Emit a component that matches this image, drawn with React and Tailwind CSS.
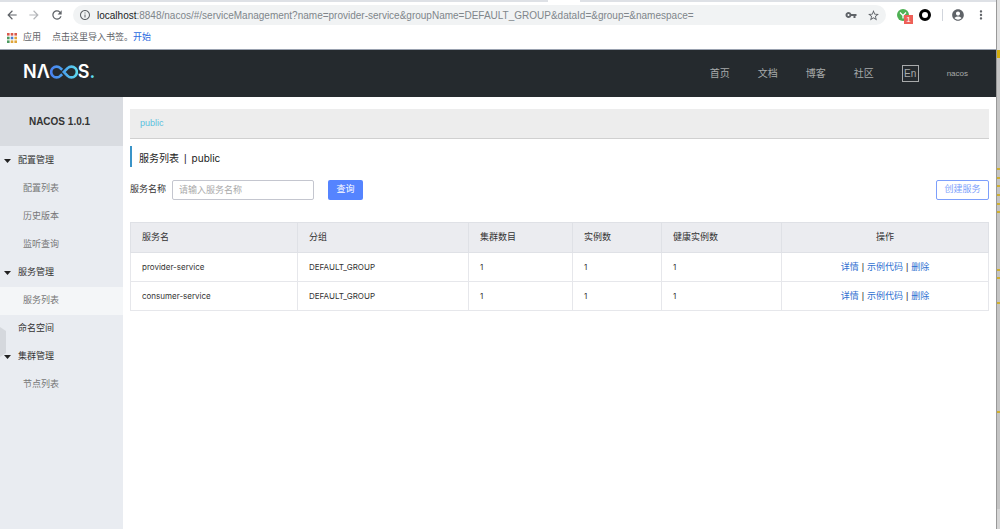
import React, { useState } from 'react';
import {
  MdAccountCircle,
  MdArrowBack,
  MdArrowForward,
  MdInfoOutline,
  MdMoreVert,
  MdRefresh,
  MdStarBorder,
  MdVpnKey,
} from 'react-icons/md';

const menu = [
  { label: '配置管理', children: ['配置列表', '历史版本', '监听查询'] },
  { label: '服务管理', children: ['服务列表'] },
  { label: '命名空间' },
  { label: '集群管理', children: ['节点列表'] },
];

const services = [
  { name: 'provider-service', group: 'DEFAULT_GROUP', clusters: 1, instances: 1, healthy: 1 },
  { name: 'consumer-service', group: 'DEFAULT_GROUP', clusters: 1, instances: 1, healthy: 1 },
];

const appDots = ['#d9594c', '#d9594c', '#d9594c', '#4c9a5f', '#4a7fd0', '#e0a63a', '#4c9a5f', '#e0a63a', '#e0a63a'];

// change markers of the editor window behind the browser
const markers = [168, 177, 185, 194, 203, 211, 269, 277, 302, 411];

function AppsIcon() {
  return (
    <svg className="h-[10px] w-[10px]" viewBox="0 0 10 10" aria-hidden="true">
      {appDots.map((fill, i) => (
        <rect key={i} x={(i % 3) * 3.7} y={Math.floor(i / 3) * 3.7} width="2.6" height="2.6" fill={fill} />
      ))}
    </svg>
  );
}

function Logo() {
  return (
    <a href="#/" aria-label="NACOS" className="mb-[3px] flex h-4 items-center font-['Inter','Liberation_Sans',sans-serif] text-lg/4 font-semibold text-white">
      <span>N</span>
      <span>Λ</span>
      <svg className="h-[14px] w-7" viewBox="0 0 28 14" fill="none" strokeWidth="2.6" aria-hidden="true">
        <defs>
          <linearGradient id="loop" x1="0" x2="28" y1="0" y2="0" gradientUnits="userSpaceOnUse">
            <stop offset="0" stopColor="#4a80f0" />
            <stop offset="0.5" stopColor="#4aa3ee" />
            <stop offset="1" stopColor="#5fdcee" />
          </linearGradient>
        </defs>
        <path d="M12.2 9.2 10.4 10.8A5.4 5.4 0 1 1 10.4 3.2L12.2 4.8M13.8 7 17.6 3.2A5.4 5.4 0 1 1 17.6 10.8Z" stroke="url(#loop)" />
      </svg>
      <span>S</span>
      <span className="text-[#5fdcee]">.</span>
    </a>
  );
}

function BrowserBar() {
  return (
    <div className="border-b border-gray-400 bg-white">
      <div className="flex h-[2px] bg-[#dee1e6]">
        <span className="ml-[548px] w-8 bg-white" />
      </div>
      <div className="flex h-[26px] items-center text-[#5f6368]">
        <button type="button" aria-label="Back" className="ml-[5px]"><MdArrowBack size={14} /></button>
        <button type="button" aria-label="Forward" className="ml-2 text-[#b4b6b9]"><MdArrowForward size={14} /></button>
        <button type="button" aria-label="Reload" className="ml-[9px]"><MdRefresh size={14} /></button>
        <div className="ml-[9px] flex h-5 min-w-0 flex-1 items-center rounded-full bg-[#f1f3f4] px-[6px]">
          <MdInfoOutline size={12} />
          <div role="textbox" aria-label="Address" className="ml-[6px] min-w-0 flex-1 truncate text-[10px] text-[#80868b]">
            <span className="text-[#202124]">localhost</span>:8848/nacos/#/serviceManagement?name=provider-service&amp;groupName=DEFAULT_GROUP&amp;dataId=&amp;group=&amp;namespace=
          </div>
          <button type="button" aria-label="Passwords"><MdVpnKey size={12} /></button>
          <button type="button" aria-label="Bookmark" className="ml-[10px]"><MdStarBorder size={13} /></button>
        </div>
        <div className="relative ml-[11px] h-3 w-3">
          <svg className="h-3 w-3" viewBox="0 0 12 12" aria-hidden="true">
            <circle cx="6" cy="6" r="6" fill="#4fb154" />
            <path d="M3 3.5 6 6.5 9 3.5M6 6.5V9.5" stroke="#fff" strokeWidth="1.3" fill="none" />
          </svg>
          <span className="absolute top-[6px] left-[7px] h-[9px] w-[9px] bg-[#ee6058] text-center text-[8px]/[9px] text-white">1</span>
        </div>
        <span className="ml-[10px] h-3 w-3 rounded-full border-[3px] border-black" />
        <span className="ml-[11px] h-3 w-px bg-gray-300" />
        <button type="button" aria-label="Profile" className="ml-2"><MdAccountCircle size={14} /></button>
        <button type="button" aria-label="Menu" className="mr-2 ml-[9px]"><MdMoreVert size={14} /></button>
      </div>
      <div className="flex h-[21px] items-center pb-[2px] pl-[7px] text-[9px] text-[#5f6368]">
        <AppsIcon />
        <a href="#apps" className="ml-[6px]">应用</a>
        <span className="ml-[11px]">点击这里导入书签。</span>
        <a href="#import" className="text-[#2a6ae0]">开始</a>
      </div>
    </div>
  );
}

function TopNav() {
  return (
    <header className="flex h-[47px] items-center bg-[#252a2e] pr-7 pl-[23px] text-[#a8aaab]">
      <Logo />
      <nav className="ml-auto flex items-center gap-7 text-[10px]">
        <a href="#home">首页</a>
        <a href="#docs">文档</a>
        <a href="#blog">博客</a>
        <a href="#community">社区</a>
        <button type="button" className="h-[17px] w-[17px] border border-[#a8aaab] text-[10px]/[15px]">En</button>
        <a href="#user" className="text-[8px]">nacos</a>
      </nav>
    </header>
  );
}

function Sidebar({ current, onSelect }) {
  return (
    <aside className="relative w-[123px] shrink-0 bg-[#e9ecf1] text-[9px] text-[#333]">
      <h1 className="flex h-[49px] items-center justify-center bg-[#d9dce1] pr-1 text-[10px] font-bold">NACOS 1.0.1</h1>
      <ul className="pt-px">
        {menu.map((item) => (
          <li key={item.label}>
            <button type="button" className="relative z-10 flex h-7 w-full items-center pl-1">
              <svg className="mr-[7px] h-1 w-[7px]" viewBox="0 0 7 4" aria-hidden="true">
                {item.children && <path d="M0 0h7L3.5 4Z" fill="#222" />}
              </svg>
              {item.label}
            </button>
            {item.children?.map((child) => (
              <a
                key={child}
                href={`#${child}`}
                onClick={() => onSelect(child)}
                className={`flex h-7 items-center pl-[23px] text-[#777] ${child === current ? 'bg-[#f4f6f8]' : ''}`}
              >
                {child}
              </a>
            ))}
          </li>
        ))}
      </ul>
      <svg className="absolute top-[230px] left-0 h-[30px] w-[6px]" viewBox="0 0 6 30" aria-hidden="true">
        <path d="M0 0 6 4V26L0 30Z" fill="#d5d8dd" />
      </svg>
    </aside>
  );
}

function Divider() {
  return <span className="mx-[3px] font-['Liberation_Sans',sans-serif]">|</span>;
}

function ServiceTable() {
  return (
    <table className="mt-[22px] w-full table-fixed border-collapse text-left text-[9px] text-[#333] [&_td]:h-[29px] [&_td]:border [&_td]:border-[#e6e7eb] [&_td]:px-[11px] [&_th]:h-[30px] [&_th]:border [&_th]:border-[#dfe1e6] [&_th]:px-[11px] [&_th]:font-normal">
      <thead className="bg-[#ebecf0]">
        <tr>
          <th className="w-[167px]">服务名</th>
          <th className="w-[171px]">分组</th>
          <th className="w-[104px]">集群数目</th>
          <th className="w-[89px]">实例数</th>
          <th className="w-[120px]">健康实例数</th>
          <th className="text-center">操作</th>
        </tr>
      </thead>
      <tbody className="font-['Inter','Noto_Sans_CJK_SC',sans-serif] text-[8px]">
        {services.map((s) => (
          <tr key={s.name}>
            <td>{s.name}</td>
            <td>{s.group}</td>
            <td>{s.clusters}</td>
            <td>{s.instances}</td>
            <td>{s.healthy}</td>
            <td className="text-center text-[9px]">
              <a href="#detail" className="text-[#2e6fd0]">详情</a>
              <Divider />
              <a href="#sample" className="text-[#2e6fd0]">示例代码</a>
              <Divider />
              <a href="#delete" className="text-[#2e6fd0]">删除</a>
            </td>
          </tr>
        ))}
      </tbody>
    </table>
  );
}

function ServiceList() {
  const [keyword, setKeyword] = useState('');

  return (
    <main className="min-w-0 flex-1 bg-white px-[7px] pt-3">
      <div className="flex h-[30px] items-center border-b border-[#d0d0d0] bg-[#ededed] pl-[10px] text-[9px]">
        <a href="#public" className="text-[#5bc0de]">public</a>
      </div>
      <h2 className="mt-[7px] flex h-[21px] items-center border-l-2 border-[#3a94c8] pt-1 pl-[7px] font-['Inter','Noto_Sans_CJK_SC',sans-serif] text-[10px] text-[#222]">
        服务列表<span className="mx-[5px] font-['Liberation_Sans',sans-serif]">|</span>public
      </h2>
      <form className="mt-[13px] flex h-5 items-center text-[9px]" onSubmit={(e) => e.preventDefault()}>
        <label htmlFor="service-name" className="text-[#333]">服务名称</label>
        <input
          id="service-name"
          className="ml-[6px] h-5 w-[142px] rounded-xs border border-[#c4c6cf] px-[6px] placeholder:text-[#aaa]"
          placeholder="请输入服务名称"
          value={keyword}
          onChange={(e) => setKeyword(e.target.value)}
        />
        <button type="submit" className="ml-[14px] h-5 w-[35px] rounded-xs bg-[#5584ff] text-white">查询</button>
        <button type="button" className="ml-auto h-5 w-[53px] rounded-xs border border-[#7d9ffb] text-[#7d9ffb]">创建服务</button>
      </form>
      <ServiceTable />
    </main>
  );
}

function EditorEdge() {
  return (
    <div className="relative flex w-1 shrink-0 flex-col border-l border-[#999] bg-[#c4c4c4]" aria-hidden="true">
      <div className="h-[50px] bg-[#e2e2e2]" />
      <div className="h-2 bg-[#d2ac0c]" />
      {markers.map((y) => (
        <span key={y} className="absolute left-0 h-[2px] w-full bg-[#d0b030]" style={{ top: y }} />
      ))}
      <div className="mt-auto h-5 bg-[#d6d6d6]" />
    </div>
  );
}

export default function App() {
  const [current, setCurrent] = useState('服务列表');

  return (
    <div className="flex min-h-screen font-['Liberation_Sans','Noto_Sans_CJK_SC',sans-serif]">
      <div className="flex min-w-0 flex-1 flex-col">
        <BrowserBar />
        <TopNav />
        <div className="flex flex-1">
          <Sidebar current={current} onSelect={setCurrent} />
          <ServiceList />
        </div>
      </div>
      <EditorEdge />
    </div>
  );
}
